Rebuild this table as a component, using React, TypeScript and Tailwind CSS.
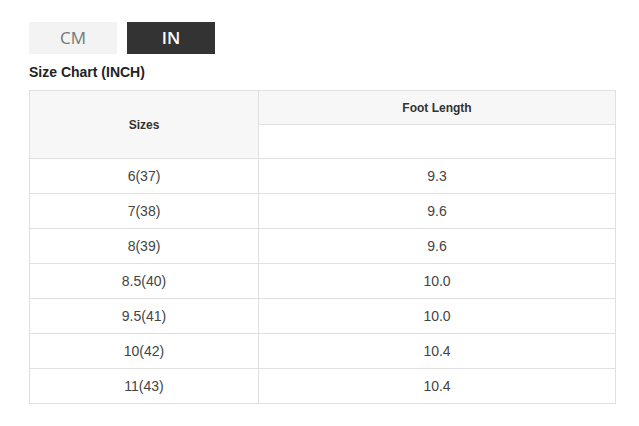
import { useState } from 'react';

const rows = [
  ['6(37)', '9.3'],
  ['7(38)', '9.6'],
  ['8(39)', '9.6'],
  ['8.5(40)', '10.0'],
  ['9.5(41)', '10.0'],
  ['10(42)', '10.4'],
  ['11(43)', '10.4'],
];

export default function App() {
  const [unit, setUnit] = useState<'CM' | 'IN'>('IN');

  return (
    <div className="min-h-screen bg-white pl-[29px] pt-[22px] font-['Liberation_Sans',Arial,sans-serif] text-[#333]">
      {/* Unit toggle */}
      <div className="flex gap-[10px]">
        <button
          onClick={() => setUnit('CM')}
          className={`w-[88px] h-[32px] font-['Open_Sans',sans-serif] text-[17px] ${
            unit === 'CM' ? 'bg-[#333] text-white font-semibold' : 'bg-[#f3f3f3] text-[#777]'
          }`}
        >
          CM
        </button>
        <button
          onClick={() => setUnit('IN')}
          className={`w-[88px] h-[32px] font-['Open_Sans',sans-serif] text-[17px] ${
            unit === 'IN' ? 'bg-[#333] text-white font-semibold' : 'bg-[#f3f3f3] text-[#777]'
          }`}
        >
          IN
        </button>
      </div>

      <h2 className="mt-[10px] text-[14px] font-bold leading-[16px] text-[#222]">Size Chart (INCH)</h2>

      {/* Chart */}
      <table className="mt-[10px] w-[587px] border-collapse text-center text-[14px] text-[#444]">
        <tbody>
          <tr className="h-[34px]">
            <th rowSpan={2} className="w-[229px] border border-[#e0e0e0] bg-[#f7f7f7] text-[12px] font-bold text-[#333]">
              Sizes
            </th>
            <th className="border border-[#e0e0e0] bg-[#f7f7f7] text-[12px] font-bold text-[#333]">Foot Length</th>
          </tr>
          <tr className="h-[34px]">
            <td className="border border-[#e0e0e0]"></td>
          </tr>
          {rows.map((r) => (
            <tr key={r[0]} className="h-[35px]">
              <td className="border border-[#e0e0e0]">{r[0]}</td>
              <td className="border border-[#e0e0e0]">{r[1]}</td>
            </tr>
          ))}
        </tbody>
      </table>
    </div>
  );
}
